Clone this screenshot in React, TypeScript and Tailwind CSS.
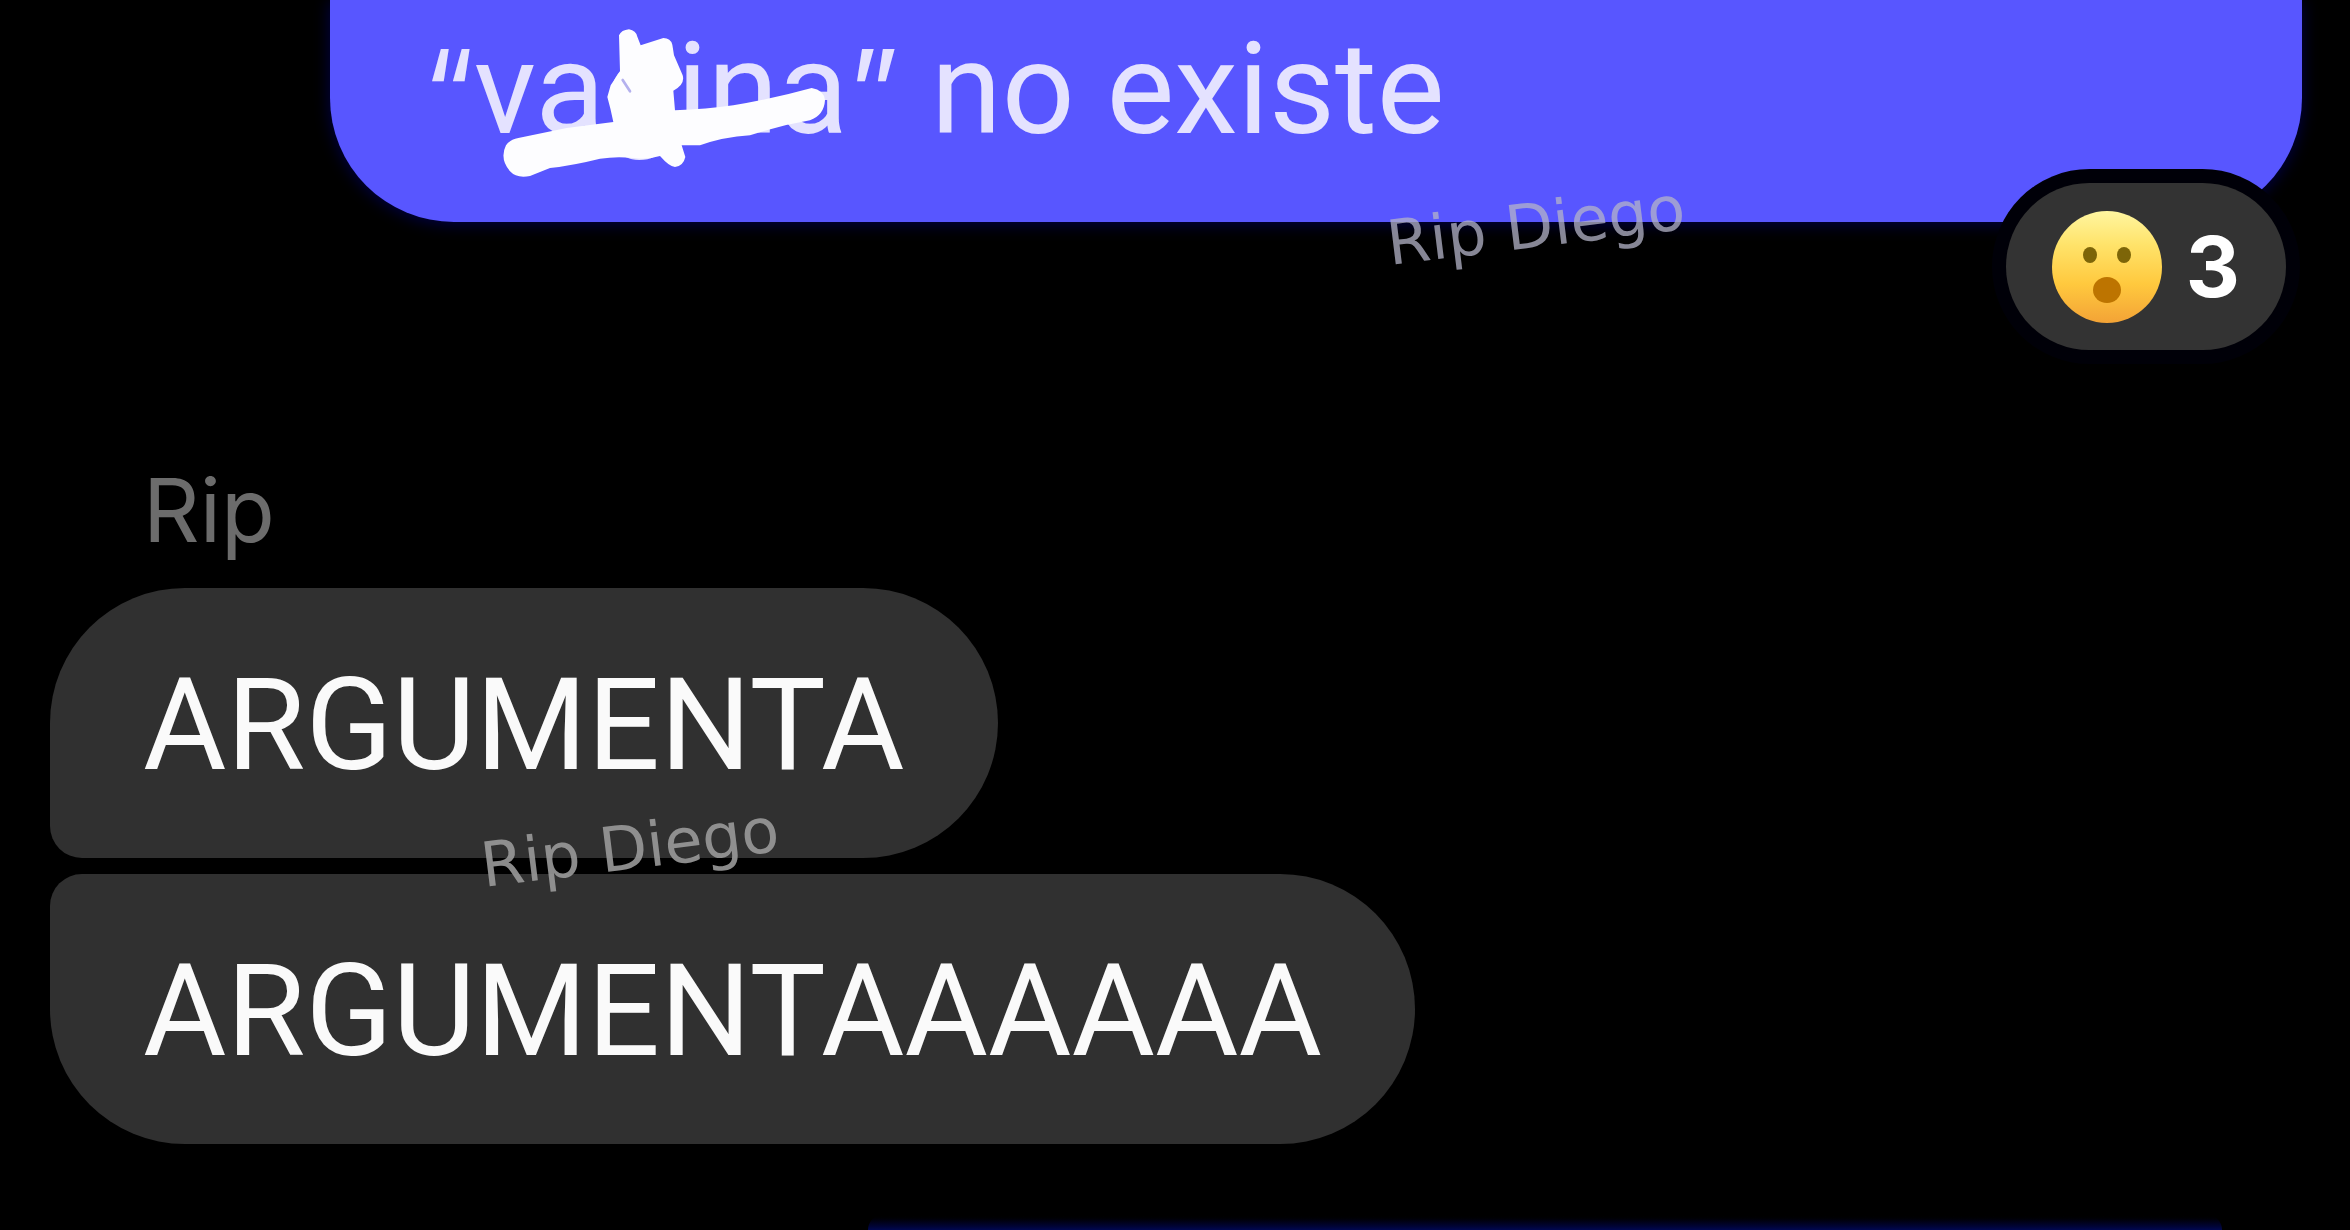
import clsx from 'clsx';

interface IncomingBubbleProps {
  text: string;
  position: 'first' | 'last';
}

function IncomingBubble({ text, position }: IncomingBubbleProps) {
  return (
    <div
      className={clsx(
        'w-fit rounded-[135px] bg-[#303030] px-[93px] pt-[58px] pb-[54px] text-[128px] leading-[158px] whitespace-nowrap text-[#fafafa]',
        position === 'first' ? 'rounded-bl-[32px]' : 'rounded-tl-[32px]'
      )}
    >
      {text}
    </div>
  );
}

function Quote({ children }: { children: string }) {
  return <span className="font-[Inter,sans-serif] text-[116px] leading-none">{children}</span>;
}

function Watermark({ className }: { className: string }) {
  return (
    <span
      aria-hidden="true"
      className={clsx(
        'absolute -rotate-7 font-["DejaVu_Sans",sans-serif] text-[62px] leading-[72px] whitespace-nowrap',
        className
      )}
    >
      Rip Diego
    </span>
  );
}

function Scribble() {
  return (
    <svg
      aria-hidden="true"
      viewBox="300 30 1020 480"
      className="absolute top-3 left-[170px] h-[160px] w-[340px] overflow-visible"
    >
      <path
        d="M318 430Q330 412 355 408L500 378L640 360Q632 320 622 285L632 250L660 208L657 100Q664 84 687 82Q708 86 712 104L722 130L790 108Q812 108 817 128L822 160L848 220Q856 248 820 266L825 325Q920 322 1000 310Q1120 290 1235 258Q1272 264 1275 295Q1272 340 1230 355Q1140 370 1050 400Q970 405 900 430L845 430L856 465Q850 492 825 495Q808 494 780 462Q740 474 700 468Q650 462 600 470Q520 490 450 498L390 522Q350 530 330 508Q298 470 318 430Z"
        fill="#fdfdff"
      />
      <path d="M668 234L690 268" fill="none" stroke="#b4b1ee" strokeWidth="8" strokeLinecap="round" />
    </svg>
  );
}

function WowFace() {
  return (
    <svg aria-hidden="true" viewBox="0 0 110 112" className="h-[112px] w-[110px]">
      <defs>
        <linearGradient id="face" x1="0" y1="0" x2="0" y2="1">
          <stop offset="0" stopColor="#fff6a0" />
          <stop offset="0.3" stopColor="#ffe36a" />
          <stop offset="0.65" stopColor="#ffc93e" />
          <stop offset="1" stopColor="#f3a336" />
        </linearGradient>
      </defs>
      <ellipse cx="55" cy="56" rx="55" ry="56" fill="url(#face)" />
      <ellipse cx="38" cy="44" rx="7" ry="8" fill="#7d6508" />
      <ellipse cx="72" cy="44" rx="7" ry="8" fill="#7d6508" />
      <ellipse cx="55" cy="79" rx="14" ry="13" fill="#bd7400" />
    </svg>
  );
}

export default function App() {
  return (
    <main className="flex min-h-screen flex-col overflow-hidden bg-black font-[Roboto,sans-serif]">
      {/* Outgoing message */}
      <section className="relative mr-12 ml-[330px] rounded-b-[124px] bg-[#5856ff] px-[93px] pt-[10px] pb-[54px] shadow-[0_2px_16px_#00004a]">
        <p className="text-[128px] leading-[158px] whitespace-nowrap text-[#e4e2ff]">
          <Quote>“</Quote>vagina<Quote>”</Quote> no existe
        </p>
        <Scribble />
        <Watermark className="top-[190px] left-[1056px] text-[#b4b4c8]/75" />
        <button
          type="button"
          aria-label="3 reactions"
          className="absolute right-4 -bottom-32 flex h-[167px] items-center gap-6 rounded-full bg-[#333] px-[46px] ring-[14px] ring-[#000008]"
        >
          <WowFace />
          <span className="font-[Inter,sans-serif] text-[84px] leading-none font-bold text-white">3</span>
        </button>
      </section>

      {/* Incoming messages */}
      <section className="relative mt-[234px] flex flex-col gap-4 pl-[50px]">
        <h2 className="mb-2 pl-[93px] font-[Inter,sans-serif] text-[88px] leading-[108px] text-[#6c6c6c]">Rip</h2>
        <IncomingBubble text="ARGUMENTA" position="first" />
        <IncomingBubble text="ARGUMENTAAAAAA" position="last" />
        <Watermark className="top-[356px] left-[480px] text-[#9a9a9a]/90" />
      </section>

      {/* Top edge of the next outgoing message */}
      <div className="mt-auto mr-[128px] ml-[868px] h-4 rounded-t-full bg-linear-to-b from-black to-[#000850]" />
    </main>
  );
}
